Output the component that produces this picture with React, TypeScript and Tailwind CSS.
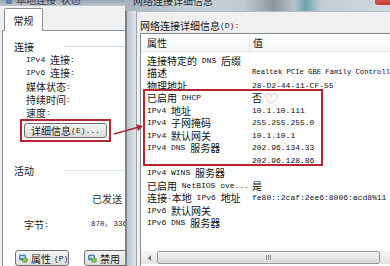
import React from "react";

const CJK = /([\u2E80-\u9FFF\uFF00-\uFFEF\u3000-\u303F]+)/;

function M({ t }: { t: string }) {
  const parts = t.split(CJK).filter((p) => p !== "");
  return (
    <>
      {parts.map((p, i) =>
        CJK.test(p) ? (
          <span key={i} className="font-['Noto_Sans_CJK_SC',sans-serif] text-[10px] leading-[11px] whitespace-pre">
            {p}
          </span>
        ) : (
          <span key={i} className="font-['Liberation_Mono',monospace] text-[8px] leading-[11px] whitespace-pre">
            {p}
          </span>
        )
      )}
    </>
  );
}

function NetIcon() {
  return (
    <svg width="9" height="9" viewBox="0 0 9 9" className="shrink-0">
      <rect x="0.5" y="1" width="6" height="5" rx="1" fill="#4c8fd6" stroke="#2b5f9e" strokeWidth="0.6" />
      <circle cx="6" cy="6" r="2.6" fill="#7fc24a" stroke="#4b8a2a" strokeWidth="0.5" />
      <rect x="1.5" y="2" width="4" height="2" fill="#bfe0ff" />
    </svg>
  );
}

function Heart() {
  return (
    <svg width="17" height="12" viewBox="0 0 17 12" className="shrink-0 ml-[1px]">
      <path
        d="M8.5 11.2 C 3 7.6, 1.2 5, 2.6 2.8 C 4 0.8, 7 1.2, 8.5 3.6 C 10 1.2, 13 0.8, 14.4 2.8 C 15.8 5, 14 7.6, 8.5 11.2 Z"
        fill="none"
        stroke="#f3aebd"
        strokeWidth="0.9"
      />
      <line x1="8.5" y1="2.6" x2="8.5" y2="5.5" stroke="#f3aebd" strokeWidth="0.7" />
    </svg>
  );
}

const rows: [string, string][] = [
  ["连接特定的 DNS 后缀", ""],
  ["描述", "Realtek PCIe GBE Family Controller"],
  ["物理地址", "28-D2-44-11-CF-55"],
  ["已启用 DHCP", "否"],
  ["IPv4 地址", "10.1.10.111"],
  ["IPv4 子网掩码", "255.255.255.0"],
  ["IPv4 默认网关", "10.1.10.1"],
  ["IPv4 DNS 服务器", "202.96.134.33"],
  ["", "202.96.128.86"],
  ["IPv4 WINS 服务器", ""],
  ["已启用 NetBIOS ove...", "是"],
  ["连接-本地 IPv6 地址", "fe80::2caf:2ee6:8006:acd8%11"],
  ["IPv6 默认网关", ""],
  ["IPv6 DNS 服务器", ""],
];

function LeftWindow() {
  return (
    <div className="w-[125px] h-full flex flex-col shrink-0 text-[#1a1a1a]">
      <div className="h-[6px] overflow-hidden flex items-start gap-[4px] pl-[6px] bg-gradient-to-b from-[#98a3ae] to-[#bfc8d1]">
        <div className="w-[6px] h-[4px] bg-[#5d7fa3] rounded-[1px]" />
        <div className="-mt-[7px] h-[12px] flex items-center text-[#3a4048]">
          <M t="本地连接 状态" />
        </div>
      </div>
      <div className="flex-1 flex min-h-0">
        <div className="w-[3px] bg-[#dbe2e9]" />
        <div className="flex-1 bg-[#f0f0f0] pl-[2px] pt-[2px] flex flex-col min-h-0">
          <div className="flex">
            <div className="ml-[2px] w-[39px] h-[23px] bg-white border border-b-0 border-[#8e939b] rounded-t-[2px] flex items-center justify-center -mb-px relative z-10">
              <M t="常规" />
            </div>
          </div>
          <div className="flex-1 bg-white border-l border-t border-[#8e939b] flex flex-col min-h-0">
            <div className="mt-[8px] h-[15px] flex items-center pl-[11px]">
              <M t="连接" />
              <div className="flex-1 h-px bg-[#cfd8de] ml-[30px]" />
            </div>
            {["IPv4 连接:", "IPv6 连接:", "媒体状态:", "持续时间:", "速度:"].map((s) => (
              <div key={s} className="h-[14px] flex items-center pl-[23px] whitespace-nowrap">
                <M t={s} />
              </div>
            ))}
            <div className="ml-[17px] w-[91px] h-[24px] border-2 border-[#b32632] p-[2px]">
              <div className="h-full w-full border border-[#707070] rounded-[3px] bg-gradient-to-b from-[#f4f4f4] to-[#dcdcdc] flex items-center justify-center whitespace-nowrap">
                <M t="详细信息(E)..." />
              </div>
            </div>
            <div className="mt-[22px] h-[14px] flex items-center pl-[11px]">
              <M t="活动" />
              <div className="flex-1 h-px bg-[#e2e8ec] ml-[30px]" />
            </div>
            <div className="mt-[14px] h-[14px] flex items-center pl-[89px] whitespace-nowrap text-[#333]">
              <M t="已发送" />
            </div>
            <div className="mt-[13px] h-[14px] flex items-center pl-[21px] whitespace-nowrap">
              <div className="w-[67px] flex items-center shrink-0">
                <M t="字节:" />
              </div>
              <span className="font-['Liberation_Mono',monospace] text-[7.5px] leading-[11px] whitespace-pre">870, 336</span>
            </div>
            <div className="mt-[19px] flex items-start whitespace-nowrap">
              <div className="ml-[12px] w-[54px] h-[16px] shrink-0 border border-[#707070] rounded-[3px] bg-gradient-to-b from-[#f4f4f4] to-[#dcdcdc] flex items-center gap-[3px] pl-[3px]">
                <NetIcon />
                <M t="属性(P)" />
              </div>
              <div className="ml-[15px] w-[50px] h-[16px] shrink-0 border border-[#707070] rounded-[3px] bg-gradient-to-b from-[#f4f4f4] to-[#dcdcdc] flex items-center gap-[3px] pl-[3px]">
                <NetIcon />
                <M t="禁用" />
              </div>
            </div>
          </div>
        </div>
      </div>
    </div>
  );
}

function RightWindow() {
  return (
    <div className="flex-1 h-full flex flex-col min-w-0 text-[#111]">
      <div className="h-[11px] shrink-0 overflow-hidden flex justify-between items-start bg-[linear-gradient(90deg,#a9b2bb_0%,#c9d0d7_25%,#c2c9d0_45%,#8d969f_56%,#b7c4c8_64%,#6fa3b0_68%,#c4ccd3_74%,#d3d9de_100%)]">
        <div className="pl-[8px] -mt-[6px] h-[12px] flex items-center text-[#2a2f35] whitespace-nowrap">
          <M t="网络连接详细信息" />
        </div>
        <div className="w-[15px] h-[5px] bg-gradient-to-b from-[#d9574a] to-[#b93a2e] rounded-bl-[3px]" />
      </div>
      <div className="flex-1 flex min-h-0">
        <div className="w-[12px] flex shrink-0">
          <div className="w-[2px] bg-[#7a828b]" />
          <div className="flex-1 bg-gradient-to-r from-[#bcc5ce] to-[#dfe4e9]" />
          <div className="w-px bg-[#9aa3ac]" />
        </div>
        <div className="flex-1 bg-[#f0f0f0] border-t border-[#b5bcc4] pl-[3px] flex flex-col min-w-0">
          <div className="mt-[7px] h-[12px] flex items-center whitespace-nowrap">
            <M t="网络连接详细信息(D):" />
          </div>
          <div className="mt-[2px] flex-1 bg-white border-l border-t border-[#828790] flex flex-col min-h-0 overflow-hidden">
            <div className="h-[18px] shrink-0 flex border-b border-[#e3e6ea] bg-gradient-to-b from-white to-[#f3f5f7]">
              <div className="w-[109px] pl-[6px] border-r border-[#e3e6ea] flex items-center">
                <M t="属性" />
              </div>
              <div className="pl-[3px] flex items-center">
                <M t="值" />
              </div>
            </div>
            <div className="pt-[2px] flex flex-col">
              {rows.map(([a, b], i) => (
                <div key={i} className="h-[12.5px] flex whitespace-nowrap">
                  <div className="w-[111px] pl-[6px] shrink-0 overflow-hidden flex items-center">
                    <M t={a} />
                  </div>
                  <div className="flex items-center">
                    {b.startsWith("Realtek") ? (
                      <span className="font-['Liberation_Mono',monospace] text-[7.2px] leading-[11px] whitespace-pre">{b}</span>
                    ) : (
                      <M t={b} />
                    )}
                    {b === "否" && <Heart />}
                  </div>
                </div>
              ))}
            </div>
            <div className="flex-1" />
            <div className="h-[13px] mb-[2px] flex shrink-0">
              <div className="w-[16px] bg-gradient-to-b from-[#f6f6f6] to-[#e4e4e4] flex items-center justify-center">
                <div className="w-0 h-0 border-y-[3px] border-y-transparent border-r-[3px] border-r-[#6a6a6a]" />
              </div>
              <div className="flex-1 border border-[#9a9a9a] rounded-[2px] bg-gradient-to-b from-[#f4f4f4] to-[#d8d8d8] flex items-center pl-[108px] gap-[1px]">
                <div className="w-px h-[5px] bg-[#8a8a8a]" />
                <div className="w-px h-[5px] bg-[#8a8a8a]" />
                <div className="w-px h-[5px] bg-[#8a8a8a]" />
              </div>
              <div className="w-[10px] bg-gradient-to-b from-[#f6f6f6] to-[#e4e4e4]" />
            </div>
          </div>
        </div>
      </div>
    </div>
  );
}

export default function App() {
  return (
    <div className="relative w-[390px] h-[266px] overflow-hidden flex bg-[#f0f0f0] font-['Noto_Sans_CJK_SC',sans-serif] text-[10px] leading-[11px]">
      <LeftWindow />
      <RightWindow />
      <div className="absolute left-[143px] top-[89px] w-[180px] h-[77px] border-2 border-[#b32632] pointer-events-none" />
      <svg className="absolute left-[112px] top-[118px] pointer-events-none" width="34" height="20" viewBox="0 0 34 20">
        <line x1="2" y1="16" x2="27" y2="9.1" stroke="#b32632" strokeWidth="1.6" />
        <polygon points="31,8 26.1,13 24.3,6.2" fill="#b32632" />
      </svg>
    </div>
  );
}
